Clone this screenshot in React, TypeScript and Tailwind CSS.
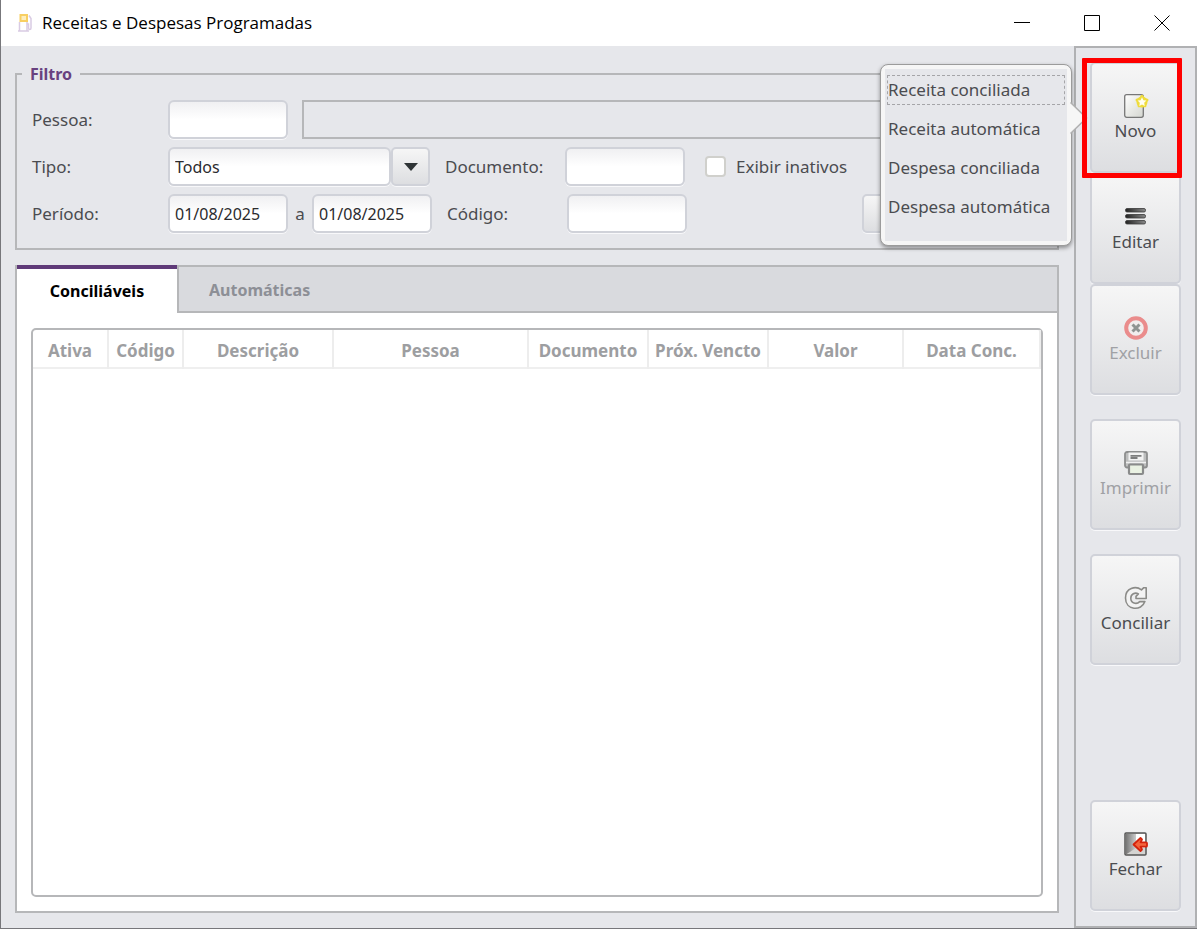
import { useState } from "react";
import type { ReactNode } from "react";

const inputStyle =
  "h-[39px] rounded-md border-2 border-[#d0d2d9] bg-linear-to-b from-[#f0f0f2] to-white to-50% px-[5px] text-base text-[#2b2b2e] shadow-[0_1px_0_#f8f8fa] focus:outline-none";

const buttonStyle =
  "rounded-[5px] border-2 border-[#d0d2d9] bg-linear-to-b from-[#f6f6f6] to-[#dddee1] shadow-[0_1px_0_#f8f8fa]";

const menuItems = ["Receita conciliada", "Receita automática", "Despesa conciliada", "Despesa automática"];

const columns = [
  { title: "Ativa", width: "w-[75px]" },
  { title: "Código", width: "w-[75px]" },
  { title: "Descrição", width: "w-[150px]" },
  { title: "Pessoa", width: "w-[195px]" },
  { title: "Documento", width: "w-[120px]" },
  { title: "Próx. Vencto", width: "w-[120px]" },
  { title: "Valor", width: "w-[135px]" },
  { title: "Data Conc.", width: "" },
];

const AppIcon = () => (
  <svg width="16" height="20" viewBox="0 0 16 20" fill="none">
    <path d="M3.500 8V2h6.500v6z" fill="#fdeebd" stroke="#f8cf62" strokeWidth="2" />
    <path d="M2.500 9V18M10 9v9M1 18h11" stroke="#d9cbe3" strokeWidth="1.500" />
    <path d="M10 11h1.500v4c0 2 2.500 2 2.500 0V5.500L12 2.500" stroke="#d9cbe3" strokeWidth="1.500" />
  </svg>
);

const NewIcon = () => (
  <svg width="24" height="26" viewBox="0 0 24 26" overflow="visible">
    <defs>
      <linearGradient id="page" x1="0" y1="0" x2="1" y2="1">
        <stop offset="0" stopColor="#fff" />
        <stop offset="1" stopColor="#d4d6d0" />
      </linearGradient>
    </defs>
    <rect x="0.700" y="1.700" width="18.600" height="22.600" rx="2" fill="url(#page)" stroke="#777" strokeWidth="1.300" />
    <circle cx="18" cy="9" r="5.500" fill="#efdc3c" />
    <path
      d="M18 3l1.800 3 3.400.9-2.200 2.600.1 3.500-3.100-1.300-3.100 1.300.1-3.500-2.200-2.600 3.400-.9z"
      fill="#efdc3c"
      stroke="#efdc3c"
      strokeWidth="2.600"
      strokeLinejoin="round"
    />
    <path d="M18 4.300l1.400 2.900 3 .4-2.200 2.200.5 3.200-2.700-1.500-2.700 1.500.5-3.200-2.200-2.200 3-.4z" fill="#fffef2" />
  </svg>
);

const EditIcon = () => (
  <svg width="24" height="26" viewBox="0 0 24 26">
    <defs>
      <linearGradient id="bar" x1="0" y1="0" x2="1" y2="0">
        <stop offset="0" stopColor="#222" />
        <stop offset="1" stopColor="#888" />
      </linearGradient>
    </defs>
    {[4.5, 10.5, 16.5].map((y) => (
      <rect key={y} x="1.500" y={y} width="20" height="3.500" rx="1.500" fill="url(#bar)" stroke="#3a3a3a" strokeWidth="0.8" />
    ))}
  </svg>
);

const DeleteIcon = () => (
  <svg width="24" height="26" viewBox="0 0 24 26">
    <circle cx="12" cy="13" r="9.800" fill="#f1eded" stroke="#ea8c8c" strokeWidth="4" />
    <path d="M8.500 9.500l7 7M15.500 9.500l-7 7" stroke="#8f9492" strokeWidth="3" />
  </svg>
);

const PrintIcon = () => (
  <svg width="24" height="26" viewBox="0 0 24 26">
    <rect x="1" y="2" width="22" height="15.500" rx="2" fill="#bdbebe" stroke="#8d8e8e" strokeWidth="1.800" />
    <rect x="4.500" y="2.500" width="15" height="8" fill="#f2f2f2" />
    <path d="M6.500 5.800h11M6.500 8h7" stroke="#7d7e7e" strokeWidth="1.800" />
    <path d="M2 12.500h20" stroke="#f0f0f0" strokeWidth="1.500" />
    <rect x="5" y="14.500" width="14" height="9.500" rx="1" fill="#eaf2e3" stroke="#8a8b8b" strokeWidth="2.200" />
  </svg>
);

const RefreshIcon = () => (
  <svg width="24" height="26" viewBox="0 0 24 26" fill="none">
    <path
      d="M17.500 4.800l2.300-2.100h2.400v10.800H12v-2.100l2.400-2.500C11 7 6.800 9 6.800 13.300c0 5 5.700 6.700 8.900 3.300h5.200C17.500 26.500 1.500 25.500 1.500 13 1.500 3 11.500.5 17.500 4.800z"
      fill="#f3f3f3"
      stroke="#8b8b88"
      strokeWidth="1.600"
      strokeLinejoin="round"
    />
  </svg>
);

const CloseIcon = () => (
  <svg width="24" height="26" viewBox="0 0 24 26">
    <defs>
      <linearGradient id="door" x1="0" y1="0" x2="1" y2="0">
        <stop offset="0" stopColor="#777" />
        <stop offset="1" stopColor="#ccc" />
      </linearGradient>
    </defs>
    <rect x="1" y="2" width="21" height="22" rx="1" fill="#d4d4d2" stroke="#555" strokeWidth="1.500" />
    <path d="M12 3h9v14l-9-1z" fill="#fff" />
    <path d="M2 3h10v14L2 23.500z" fill="url(#door)" />
    <path
      d="M9.500 13.500l7-6.500 1.500 1.500-1.500 2.800H22a1 1 0 0 1 1 1v2.400a1 1 0 0 1-1 1h-5.500l1.500 2.800-1.500 1.500z"
      fill="#f4643c"
      stroke="#d3220c"
      strokeWidth="1.800"
      strokeLinejoin="round"
    />
  </svg>
);

type ToolButtonProps = { label: string; icon: ReactNode; disabled?: boolean };

const ToolButton = ({ label, icon, disabled }: ToolButtonProps) => (
  <button
    type="button"
    disabled={disabled}
    className={`${buttonStyle} flex h-[111px] w-full flex-col items-center justify-center leading-6 ${
      disabled ? "text-[#a0a1a5]" : "text-[#4b4c50]"
    }`}
  >
    {icon}
    {label}
  </button>
);

const TitleBar = () => (
  <header className="flex h-[46px] shrink-0 items-center bg-white pl-4 text-black">
    <AppIcon />
    <h1 className="ml-[9px] flex-1 font-['Open_Sans',sans-serif] text-[17px]">Receitas e Despesas Programadas</h1>
    <button type="button" aria-label="Minimizar" className="flex h-full w-[70px] items-center justify-center">
      <svg width="16" height="16" viewBox="0 0 16 16" stroke="currentColor">
        <path d="M0 7.500h16" />
      </svg>
    </button>
    <button type="button" aria-label="Maximizar" className="flex h-full w-[70px] items-center justify-center">
      <svg width="16" height="16" viewBox="0 0 16 16" stroke="currentColor" fill="none">
        <path d="M.5.5h15v15H.5z" />
      </svg>
    </button>
    <button type="button" aria-label="Fechar janela" className="flex h-full w-[70px] items-center justify-center">
      <svg width="16" height="16" viewBox="0 0 16 16" stroke="currentColor">
        <path d="M.5.5l15 15M15.500.5l-15 15" />
      </svg>
    </button>
  </header>
);

const Filter = () => {
  const [filter, setFilter] = useState({
    person: "",
    type: "Todos",
    document: "",
    from: "01/08/2025",
    to: "01/08/2025",
    code: "",
    inactive: false,
  });

  return (
    <fieldset className="border-2 border-[#b6b7b9] px-[15px] pb-[15px]">
      <legend className="-ml-2.5 px-2 text-base leading-6 font-bold text-[#68417f]">Filtro</legend>
      <div className="flex flex-col gap-2 pt-3.5">
        <div className="flex items-center">
          <label htmlFor="person" className="w-[136px]">Pessoa:</label>
          <input
            id="person"
            className={`${inputStyle} w-[120px]`}
            value={filter.person}
            onChange={(e) => setFilter({ ...filter, person: e.target.value })}
          />
          <input aria-label="Nome da pessoa" readOnly className="ml-3.5 h-[39px] flex-1 border-2 border-[#b6b7b9]" />
        </div>
        <div className="flex items-center">
          <label htmlFor="type" className="w-[136px]">Tipo:</label>
          <select
            id="type"
            className={`${inputStyle} w-[223px] appearance-none`}
            value={filter.type}
            onChange={(e) => setFilter({ ...filter, type: e.target.value })}
          >
            <option>Todos</option>
            <option>Receita</option>
            <option>Despesa</option>
          </select>
          <button
            type="button"
            aria-label="Abrir lista de tipos"
            className={`${buttonStyle} flex h-[39px] w-[39px] items-center justify-center`}
          >
            <svg width="14" height="8" viewBox="0 0 14 8" fill="#2f3436">
              <path d="M0 0h14L7 8z" />
            </svg>
          </button>
          <label htmlFor="document" className="ml-[15px] w-[120px]">Documento:</label>
          <input
            id="document"
            className={`${inputStyle} w-[120px]`}
            value={filter.document}
            onChange={(e) => setFilter({ ...filter, document: e.target.value })}
          />
          <input
            id="inactive"
            type="checkbox"
            className="ml-5 size-[21px] appearance-none rounded-sm border-2 border-[#d0d0cc] bg-white checked:bg-[#68417f]"
            checked={filter.inactive}
            onChange={(e) => setFilter({ ...filter, inactive: e.target.checked })}
          />
          <label htmlFor="inactive" className="ml-2.5">Exibir inativos</label>
        </div>
        <div className="flex items-center">
          <label htmlFor="from" className="w-[136px]">Período:</label>
          <input
            id="from"
            className={`${inputStyle} w-[120px]`}
            value={filter.from}
            onChange={(e) => setFilter({ ...filter, from: e.target.value })}
          />
          <label htmlFor="to" className="w-6 text-center">a</label>
          <input
            id="to"
            className={`${inputStyle} w-[120px]`}
            value={filter.to}
            onChange={(e) => setFilter({ ...filter, to: e.target.value })}
          />
          <label htmlFor="code" className="ml-[15px] w-[120px]">Código:</label>
          <input
            id="code"
            className={`${inputStyle} w-[120px]`}
            value={filter.code}
            onChange={(e) => setFilter({ ...filter, code: e.target.value })}
          />
          <button type="button" aria-label="Filtrar" className={`${buttonStyle} ml-auto h-[39px] w-[180px]`} />
        </div>
      </div>
    </fieldset>
  );
};

const Results = () => (
  <section className="mt-[15px] flex flex-1 flex-col border-2 border-[#b6b7b9] bg-white">
    <div role="tablist" className="flex h-[46px] text-base font-bold">
      <button
        type="button"
        role="tab"
        aria-selected="true"
        className="-mt-0.5 w-[160px] border-t-4 border-[#5f3a78] text-black"
      >
        Conciliáveis
      </button>
      <div className="flex flex-1 border-b-2 border-l-2 border-[#b6b7b9] bg-[#d9dade]">
        <button type="button" role="tab" aria-selected="false" className="px-[30px] pt-0.5 text-[#8d8f96]">
          Automáticas
        </button>
      </div>
    </div>
    <div className="mx-3.5 mt-[15px] mb-3.5 flex-1 rounded-[5px] border-2 border-[#b6b7b9]">
      <table className="w-full table-fixed">
        <thead>
          <tr className="h-[38px] border-b-2 border-[#efefef] text-[#9d9ea1]">
            {columns.map(({ title, width }) => (
              <th key={title} className={`${width} border-r-2 border-[#ededed] pt-1 whitespace-nowrap font-bold`}>
                {title}
              </th>
            ))}
          </tr>
        </thead>
        <tbody />
      </table>
    </div>
  </section>
);

const NewMenu = () => (
  <div
    role="menu"
    className="absolute top-0.5 right-[109px] w-[192px] rounded-lg border border-[#9b9b9b] bg-[#f6f6f6] p-1 shadow-[0_2px_4px_#0006]"
  >
    <div className="flex flex-col gap-[9px] bg-[#e6e7eb] px-0.5 pt-1.5 pb-[19px]">
      {menuItems.map((item) => (
        <button
          key={item}
          type="button"
          role="menuitem"
          className="h-[30px] border border-dashed border-transparent text-left whitespace-nowrap text-[#4b4c50] first:border-[#a5a5a8]"
        >
          {item}
        </button>
      ))}
    </div>
    <svg width="19" height="34" viewBox="0 0 19 34" className="absolute top-9 -right-[18px]">
      <path d="M0 1l16.500 16L0 33z" fill="#f6f6f6" />
      <path d="M.5 1.500l16 15.500-16 15.500" fill="none" stroke="#b0b0b0" strokeWidth="1.500" />
    </svg>
  </div>
);

const Toolbar = () => (
  <aside className="flex w-[123px] shrink-0 flex-col border-2 border-[#b0b1b3] px-3.5 pt-3.5 pb-[15px]">
    <div className="relative z-10">
      <ToolButton label="Novo" icon={<NewIcon />} />
      <NewMenu />
      <span className="pointer-events-none absolute -top-1 -right-px -bottom-[5px] -left-2 rounded-[1px] border-[5px] border-[#ff0000]" />
    </div>
    <ToolButton label="Editar" icon={<EditIcon />} />
    <ToolButton label="Excluir" icon={<DeleteIcon />} disabled />
    <div className="my-6 flex flex-col gap-6">
      <ToolButton label="Imprimir" icon={<PrintIcon />} disabled />
      <ToolButton label="Conciliar" icon={<RefreshIcon />} />
    </div>
    <div className="mt-auto">
      <ToolButton label="Fechar" icon={<CloseIcon />} />
    </div>
  </aside>
);

const App = () => {
  return (
    <div className="flex min-h-screen flex-col border-b border-l border-[#77777b] bg-[#e6e7eb] font-['Noto_Sans',sans-serif] text-[17px] leading-6 text-[#4b4c50]">
      <TitleBar />
      <div className="flex flex-1">
        <main className="flex min-w-0 flex-1 flex-col pt-4 pr-[15px] pb-[15px] pl-3.5">
          <Filter />
          <Results />
        </main>
        <Toolbar />
      </div>
    </div>
  );
};

export default App;
